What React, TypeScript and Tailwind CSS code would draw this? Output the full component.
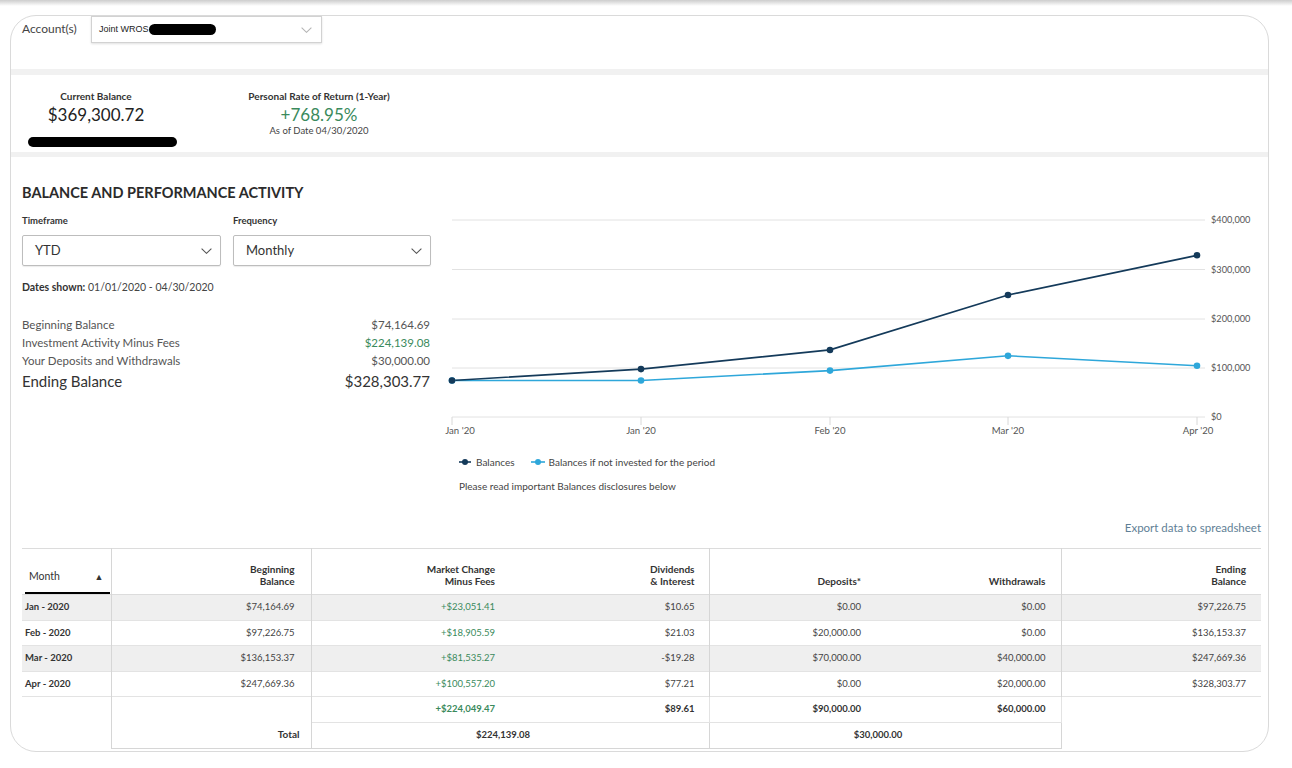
import React from "react";

function Chevron({ color = "#555", w = 11 }: { color?: string; w?: number }) {
  return (
    <svg width={w} height={Math.round(w * 0.55)} viewBox="0 0 11 6" fill="none">
      <polyline points="0.6,0.6 5.5,5.3 10.4,0.6" stroke={color} strokeWidth="1.1" />
    </svg>
  );
}

const toY = (v: number) => 233 - v * 0.0004925;
const xs = [21, 210, 399, 577, 766];
const dark = [74164.69, 97226.75, 136153.37, 247669.36, 328303.77];
const light = [74164.69, 74164.69, 94164.69, 124164.69, 104164.69];

function Chart() {
  const grid = [
    { y: 36, l: "$400,000" },
    { y: 85.5, l: "$300,000" },
    { y: 135, l: "$200,000" },
    { y: 184, l: "$100,000" },
    { y: 233, l: "$0" },
  ];
  const xl = [
    { x: 29, l: "Jan '20" },
    { x: 210, l: "Jan '20" },
    { x: 399, l: "Feb '20" },
    { x: 577, l: "Mar '20" },
    { x: 767, l: "Apr '20" },
  ];
  const dp = dark.map((v, i) => `${xs[i]},${toY(v).toFixed(1)}`).join(" ");
  const lp = light.map((v, i) => `${xs[i]},${toY(v).toFixed(1)}`).join(" ");
  return (
    <svg width="830" height="265" viewBox="0 0 830 265" className="block">
      {grid.map((g) => (
        <g key={g.l}>
          <line x1="21" x2="774" y1={g.y} y2={g.y} stroke="#e2e2e2" strokeWidth="1" />
          <text x="780" y={g.y + 3.2} fontSize="9.2" fill="#555" fontFamily="Lato, sans-serif">
            {g.l}
          </text>
        </g>
      ))}
      {xs.map((x) => (
        <line key={x} x1={x} x2={x} y1="233" y2="241" stroke="#d8d8d8" strokeWidth="1" />
      ))}
      {xl.map((t, i) => (
        <text key={i} x={t.x} y="250" fontSize="9.6" fill="#555" textAnchor="middle" fontFamily="Lato, sans-serif">
          {t.l}
        </text>
      ))}
      <polyline points={lp} fill="none" stroke="#2ea7da" strokeWidth="1.6" />
      <polyline points={dp} fill="none" stroke="#143a5a" strokeWidth="1.7" />
      {light.map((v, i) => (
        <circle key={"l" + i} cx={xs[i]} cy={toY(v)} r="3.3" fill="#2ea7da" />
      ))}
      {dark.map((v, i) => (
        <circle key={"d" + i} cx={xs[i]} cy={toY(v)} r="3.3" fill="#143a5a" />
      ))}
    </svg>
  );
}

const rows = [
  ["Jan - 2020", "$74,164.69", "+$23,051.41", "$10.65", "$0.00", "$0.00", "$97,226.75"],
  ["Feb - 2020", "$97,226.75", "+$18,905.59", "$21.03", "$20,000.00", "$0.00", "$136,153.37"],
  ["Mar - 2020", "$136,153.37", "+$81,535.27", "-$19.28", "$70,000.00", "$40,000.00", "$247,669.36"],
  ["Apr - 2020", "$247,669.36", "+$100,557.20", "$77.21", "$0.00", "$20,000.00", "$328,303.77"],
];

export default function App() {
  const vb = "border-r border-[#d6d6d6]";
  return (
    <div className="w-[1292px] h-[768px] bg-white font-['Lato',sans-serif] text-[#333] overflow-hidden">
      <div className="h-[6px] bg-gradient-to-b from-[#cdcdcd] to-white" />
      <div className="ml-[10px] mt-[9px] w-[1259px] h-[737px] border border-[#dadada] rounded-[26px] overflow-hidden">
        {/* Account row */}
        <div className="h-[53px] flex items-start pl-[11px]">
          <div className="pt-[5px] text-[12px] leading-[16px] text-[#444] w-[69px]">Account(s)</div>
          <div className="w-[231px] h-[27px] border border-[#d2d2d2] shadow-[0_1px_2px_rgba(0,0,0,0.12)] flex items-center pl-[7px] pr-[9px]">
            <span className="font-['Liberation_Sans',sans-serif] text-[9px] text-[#222]">Joint WROS</span>
            <span className="w-[67px] h-[11px] bg-black rounded-full" />
            <span className="flex-1" />
            <Chevron color="#b5b5b5" w={11} />
          </div>
        </div>
        <div className="h-[6px] bg-[#f1f1f1]" />
        {/* Balance row */}
        <div className="h-[77px] flex">
          <div className="w-[170px] pt-[15px]">
            <div className="text-center text-[10px] font-bold leading-[12px] text-[#333]">Current Balance</div>
            <div className="text-center text-[17px] leading-[20px] mt-[3px] text-[#222]">$369,300.72</div>
            <div className="ml-[17px] mt-[12px] w-[149px] h-[10px] bg-black rounded-full" />
          </div>
          <div className="ml-[48px] w-[180px] pt-[15px] text-center">
            <div className="text-[10px] font-bold leading-[12px] text-[#333] whitespace-nowrap">Personal Rate of Return (1-Year)</div>
            <div className="text-[17px] leading-[20px] mt-[3px] text-[#3a8a5c]">+768.95%</div>
            <div className="text-[9.5px] leading-[12px] text-[#444]">As of Date 04/30/2020</div>
          </div>
        </div>
        <div className="h-[5px] bg-[#f1f1f1]" />
        {/* Main */}
        <div className="pl-[11px] pr-[7px] pt-[27px]">
          <div className="flex">
            <div className="w-[409px]">
              <div className="text-[14.5px] leading-[18px] font-bold text-[#2b2b2b]">BALANCE AND PERFORMANCE ACTIVITY</div>
              <div className="flex mt-[12px]">
                <div className="w-[211px] text-[9.5px] leading-[14px] font-bold text-[#333]">Timeframe</div>
                <div className="text-[9.5px] leading-[14px] font-bold text-[#333]">Frequency</div>
              </div>
              <div className="flex mt-[7px] gap-[12px]">
                <div className="w-[199px] h-[31px] border border-[#bdbdbd] rounded-[2px] shadow-[0_1px_1px_rgba(0,0,0,0.08)] flex items-center justify-between pl-[12px] pr-[8px]">
                  <span className="text-[13px] text-[#333]">YTD</span>
                  <Chevron color="#555" w={11} />
                </div>
                <div className="w-[198px] h-[31px] border border-[#bdbdbd] rounded-[2px] shadow-[0_1px_1px_rgba(0,0,0,0.08)] flex items-center justify-between pl-[12px] pr-[8px]">
                  <span className="text-[13px] text-[#333]">Monthly</span>
                  <Chevron color="#555" w={11} />
                </div>
              </div>
              <div className="mt-[14px] text-[10.5px] leading-[14px] text-[#444]">
                <span className="font-bold text-[#333]">Dates shown:</span> 01/01/2020 - 04/30/2020
              </div>
              <div className="mt-[22px] text-[11.5px] leading-[18px] text-[#555] pr-[1px]">
                <div className="flex justify-between">
                  <span>Beginning Balance</span>
                  <span>$74,164.69</span>
                </div>
                <div className="flex justify-between">
                  <span>Investment Activity Minus Fees</span>
                  <span className="text-[#3a8a5c]">$224,139.08</span>
                </div>
                <div className="flex justify-between">
                  <span>Your Deposits and Withdrawals</span>
                  <span>$30,000.00</span>
                </div>
                <div className="flex justify-between text-[15px] leading-[22px] text-[#333]">
                  <span>Ending Balance</span>
                  <span>$328,303.77</span>
                </div>
              </div>
            </div>
            <div className="w-[830px]">
              <Chart />
              <div className="mt-[6px] pl-[28px] flex items-center text-[10px] leading-[14px] text-[#444]">
                <svg width="12" height="8" viewBox="0 0 12 8" className="mr-[5px]">
                  <line x1="0" x2="12" y1="4" y2="4" stroke="#143a5a" strokeWidth="1.6" />
                  <circle cx="6" cy="4" r="3" fill="#143a5a" />
                </svg>
                <span>Balances</span>
                <svg width="14" height="8" viewBox="0 0 14 8" className="ml-[16px] mr-[4px]">
                  <line x1="0" x2="14" y1="4" y2="4" stroke="#2ea7da" strokeWidth="1.6" />
                  <circle cx="7" cy="4" r="3" fill="#2ea7da" />
                </svg>
                <span>Balances if not invested for the period</span>
              </div>
              <div className="mt-[10px] pl-[28px] text-[10px] leading-[14px] text-[#444]">
                Please read important Balances disclosures below
              </div>
            </div>
          </div>
          <div className="mt-[28px] text-right text-[11.5px] leading-[14px] text-[#5f7f96]">Export data to spreadsheet</div>
          <table className="mt-[13px] w-[1239px] table-fixed border-collapse text-[9.5px]">
            <colgroup>
              <col className="w-[89px]" />
              <col className="w-[200px]" />
              <col className="w-[199px]" />
              <col className="w-[199px]" />
              <col className="w-[167px]" />
              <col className="w-[185px]" />
              <col className="w-[200px]" />
            </colgroup>
            <thead>
              <tr className="h-[46px] border-t border-b border-[#dcdcdc] align-bottom text-[10px]">
                <th className={`${vb} p-0 font-normal text-left`}>
                  <div className="ml-[3px] mr-[1px] pl-[4px] pr-[6px] pb-[7px] border-b-[2px] border-black flex items-center justify-between text-[10.5px] text-[#333]">
                    <span>Month</span>
                    <span className="text-[9px] leading-[10px]">▲</span>
                  </div>
                </th>
                <th className={`${vb} pr-[16px] pb-[7px] text-right font-bold leading-[12px] text-[#333]`}>
                  Beginning
                  <br />
                  Balance
                </th>
                <th className="pr-[15px] pb-[7px] text-right font-bold leading-[12px] text-[#333]">
                  Market Change
                  <br />
                  Minus Fees
                </th>
                <th className={`${vb} pr-[14px] pb-[7px] text-right font-bold leading-[12px] text-[#333]`}>
                  Dividends
                  <br />& Interest
                </th>
                <th className="pr-[15px] pb-[7px] text-right font-bold leading-[12px] text-[#333]">Deposits*</th>
                <th className={`${vb} pr-[15px] pb-[7px] text-right font-bold leading-[12px] text-[#333]`}>Withdrawals</th>
                <th className="pr-[15px] pb-[7px] text-right font-bold leading-[12px] text-[#333]">
                  Ending
                  <br />
                  Balance
                </th>
              </tr>
            </thead>
            <tbody>
              {rows.map((r, i) => (
                <tr key={r[0]} className={`h-[25.5px] border-b border-[#e3e3e3] ${i % 2 === 0 ? "bg-[#efefef]" : "bg-white"}`}>
                  <td className={`${vb} pl-[3px] font-bold text-[#333]`}>{r[0]}</td>
                  <td className={`${vb} pr-[16px] text-right text-[#444]`}>{r[1]}</td>
                  <td className="pr-[15px] text-right text-[#3a8a5c]">{r[2]}</td>
                  <td className={`${vb} pr-[14px] text-right text-[#444]`}>{r[3]}</td>
                  <td className="pr-[15px] text-right text-[#444]">{r[4]}</td>
                  <td className={`${vb} pr-[15px] text-right text-[#444]`}>{r[5]}</td>
                  <td className="pr-[15px] text-right text-[#444]">{r[6]}</td>
                </tr>
              ))}
              <tr className="h-[26px]">
                <td className={vb}></td>
                <td rowSpan={2} className={`${vb} border-b border-[#d6d6d6] pr-[11px] pb-[6px] align-bottom text-right font-bold text-[10px] text-[#333]`}>
                  Total
                </td>
                <td className="border-b border-[#e3e3e3] pr-[15px] text-right font-bold text-[#3a8a5c]">+$224,049.47</td>
                <td className={`${vb} border-b border-[#e3e3e3] pr-[14px] text-right font-bold text-[#333]`}>$89.61</td>
                <td className="border-b border-[#e3e3e3] pr-[15px] text-right font-bold text-[#333]">$90,000.00</td>
                <td className={`${vb} border-b border-[#e3e3e3] pr-[15px] text-right font-bold text-[#333]`}>$60,000.00</td>
                <td></td>
              </tr>
              <tr className="h-[26px]">
                <td className={vb}></td>
                <td colSpan={2} className={`${vb} border-b border-[#d6d6d6] pr-[14px] text-center font-bold text-[#333]`}>
                  $224,139.08
                </td>
                <td colSpan={2} className={`${vb} border-b border-[#d6d6d6] pr-[14px] text-center font-bold text-[#333]`}>
                  $30,000.00
                </td>
                <td></td>
              </tr>
            </tbody>
          </table>
        </div>
      </div>
    </div>
  );
}
